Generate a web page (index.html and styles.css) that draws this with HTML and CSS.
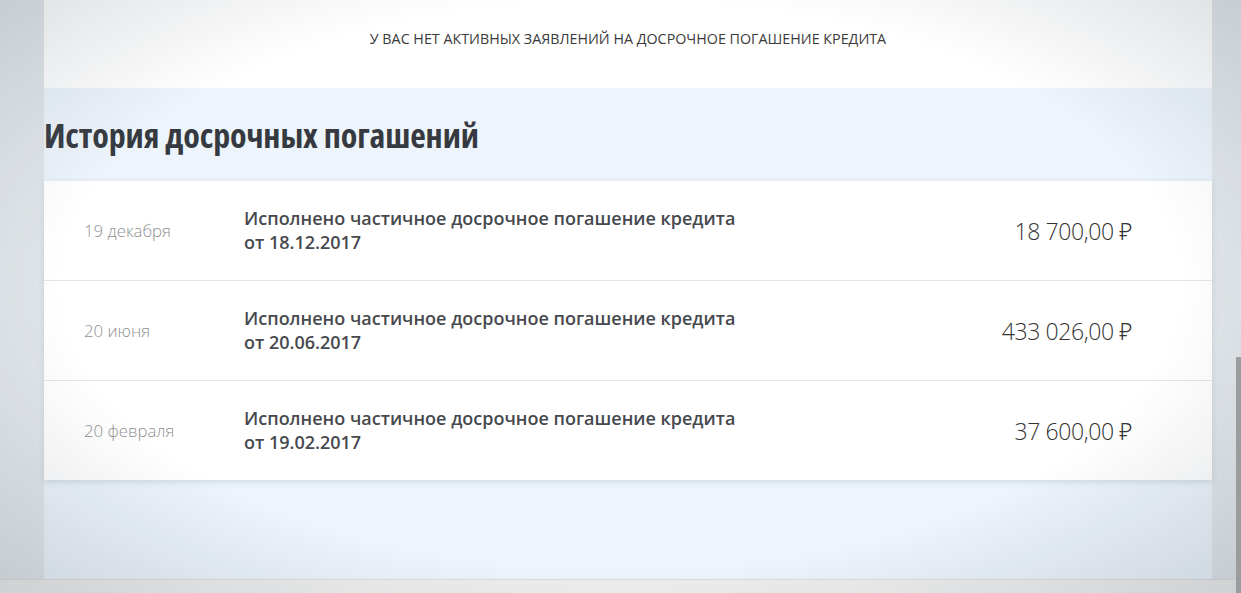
FILE: index.html
```html
<!DOCTYPE html>
<html lang="ru">
<head>
<meta charset="utf-8">
<link rel="stylesheet" href="styles.css">
</head>
<body>
<div class="page">
  <main class="content">
    <section class="notice">У вас нет активных заявлений на досрочное погашение кредита</section>
    <h1 class="title">История досрочных погашений</h1>
    <ul class="history">
      <li class="row">
        <span class="date">19 декабря</span>
        <span class="desc">Исполнено частичное досрочное погашение кредита<br>от 18.12.2017</span>
        <span class="amount">18 700,00 ₽</span>
      </li>
      <li class="row">
        <span class="date">20 июня</span>
        <span class="desc">Исполнено частичное досрочное погашение кредита<br>от 20.06.2017</span>
        <span class="amount">433 026,00 ₽</span>
      </li>
      <li class="row">
        <span class="date">20 февраля</span>
        <span class="desc">Исполнено частичное досрочное погашение кредита<br>от 19.02.2017</span>
        <span class="amount">37 600,00 ₽</span>
      </li>
    </ul>
  </main>
  <footer class="footer"></footer>
</div>
<div class="vignette"></div>
<div class="scroll-thumb"></div>
</body>
</html>
```

FILE: styles.css
```css
html, body {
  margin: 0;
  padding: 0;
  height: 100%;
  overflow: hidden;
}
body {
  background: #e1e6ea;
  font-family: "Open Sans", "Noto Sans", sans-serif;
  color: #333;
}
.page {
  display: flex;
  flex-direction: column;
  height: 593px;
}
.content {
  margin-left: 44px;
  width: 1168px;
  height: 580px;
  background: #edf4fb;
  display: flex;
  flex-direction: column;
}
.notice {
  background: #ffffff;
  height: 88px;
  box-sizing: border-box;
  padding-top: 29px;
  text-align: center;
  font-size: 14.3px;
  text-transform: uppercase;
  color: #3a3a3a;
}
.title {
  margin: 0;
  height: 93px;
  box-sizing: border-box;
  padding-top: 27px;
  font-family: "Open Sans", sans-serif;
  font-weight: 700;
  font-size: 34px;
  font-stretch: 75%;
  letter-spacing: -0.1px;
  color: #363a40;
  line-height: 40px;
}
.history {
  list-style: none;
  margin: 0;
  padding: 0;
  background: #fff;
  box-shadow: 0 2px 6px rgba(150, 170, 190, 0.35);
}
.row {
  height: 100px;
  display: flex;
  align-items: center;
  border-top: 1px solid #e3e6e9;
  box-sizing: border-box;
  padding: 0 80px 0 40px;
}
.row:first-child {
  border-top: none;
  height: 99px;
}
.date {
  width: 160px;
  font-size: 16.8px;
  font-weight: 300;
  color: #8f9091;
}
.desc {
  flex: 1;
  font-size: 18px;
  font-weight: 600;
  line-height: 24px;
  color: #46494e;
  margin-top: -2px;
}
.amount {
  font-size: 23px;
  font-weight: 300;
  color: #333;
  letter-spacing: -0.4px;
}
.footer {
  height: 13px;
  border-top: 1px solid #d8dcdf;
  background: #eeeeee;
}
.vignette {
  position: fixed;
  inset: 0;
  pointer-events: none;
  background:
    radial-gradient(ellipse 75% 80% at 50% 48%, rgba(255,255,255,0) 60%, rgba(110,120,130,0.3) 100%);
}
.scroll-thumb {
  position: fixed;
  right: 0;
  top: 357px;
  width: 5px;
  height: 236px;
  background: #9a9c9e;
}
```
